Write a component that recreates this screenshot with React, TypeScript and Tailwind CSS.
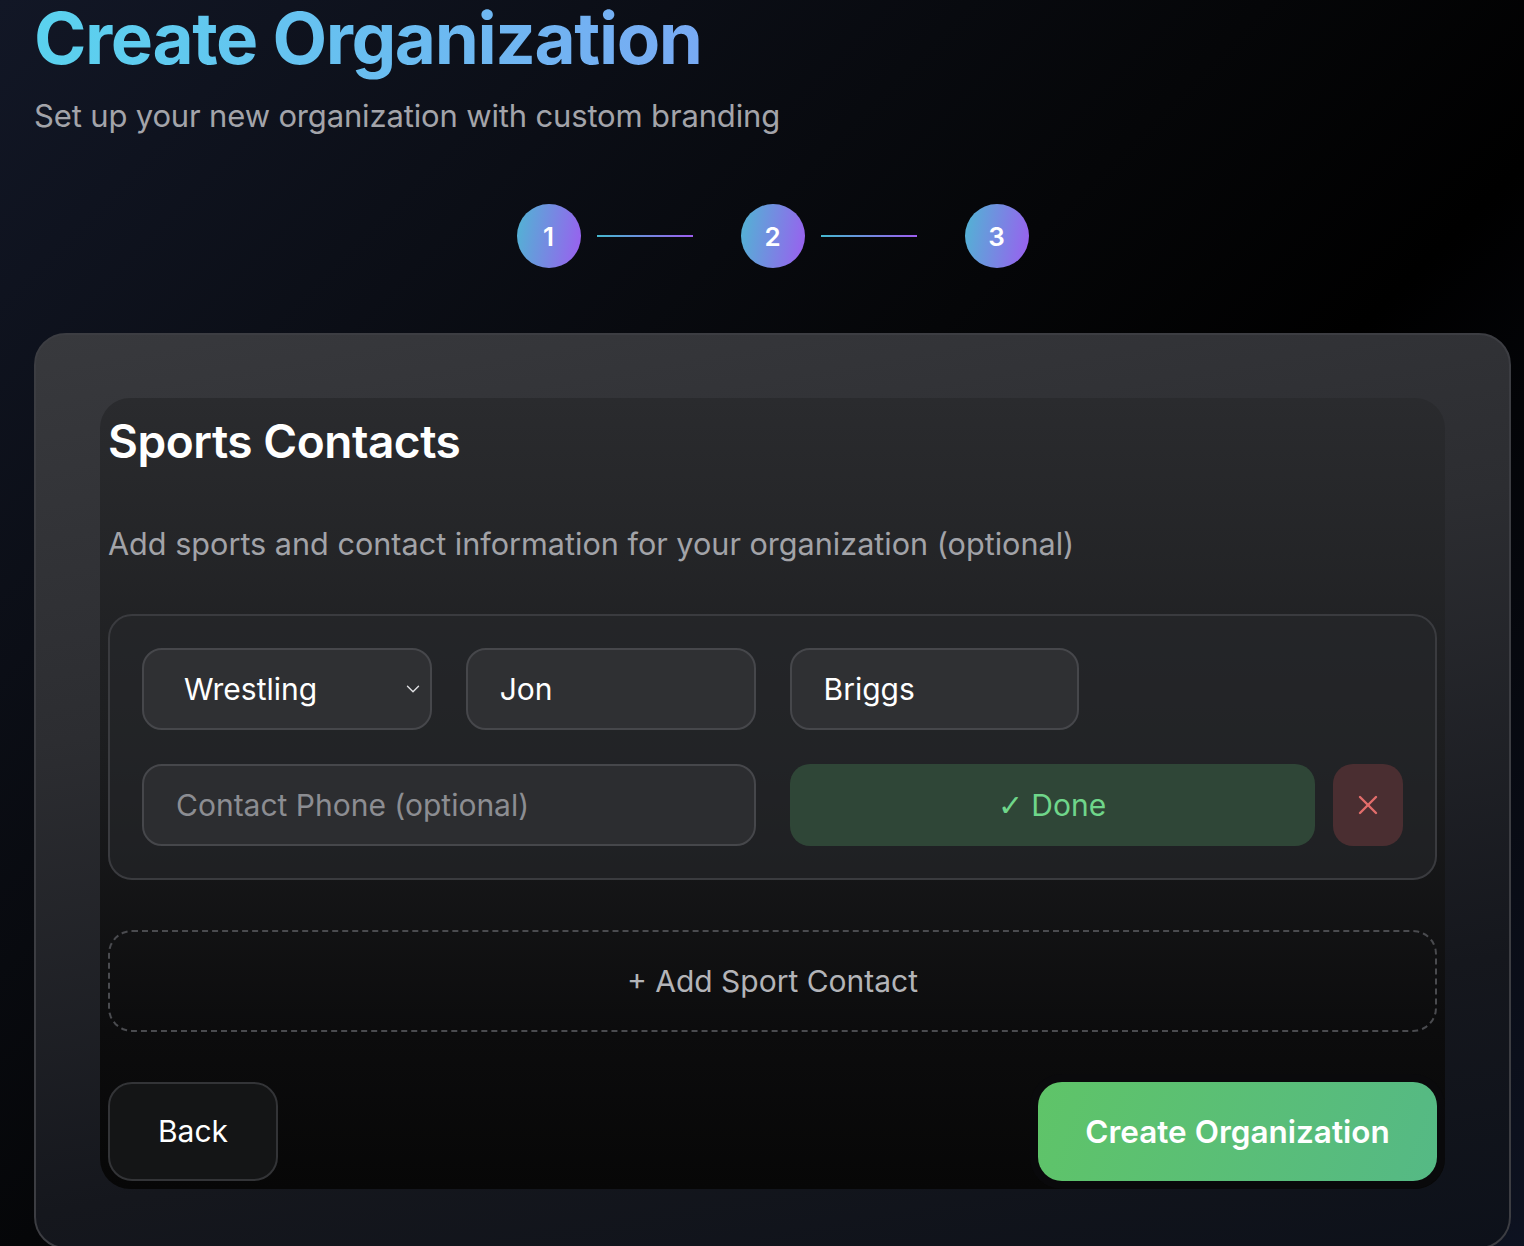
import React from "react";
import { ChevronDown, X } from "lucide-react";

function Step({ n }: { n: number }) {
  return (
    <div className="w-16 h-16 rounded-full bg-[linear-gradient(100deg,#4fb6d3,#9c5df0)] flex items-center justify-center text-white text-[26px] font-semibold">
      {n}
    </div>
  );
}

export default function App() {
  return (
    <div className="min-h-screen w-full bg-[linear-gradient(135deg,#121726_0%,#050608_45%,#000000_60%,#0e1322_100%)] font-['Inter','Noto_Sans',sans-serif] pl-[34px] pr-[13px] pb-10">
      <h1 className="text-[71px] leading-[86px] font-bold tracking-[-0.02em] bg-[linear-gradient(90deg,#5ad2ee,#78aaf3)] bg-clip-text text-transparent inline-block -mt-[5px]">
        Create Organization
      </h1>
      <p className="mt-[15px] text-[31px] leading-[40px] text-[#a3a4aa] tracking-[-0.005em]">
        Set up your new organization with custom branding
      </p>

      <div className="mt-[68px] flex items-center justify-center">
        <Step n={1} />
        <div className="ml-4 mr-12 w-24 h-[2px] bg-[linear-gradient(90deg,#45b8cf,#9d5df0)]" />
        <Step n={2} />
        <div className="ml-4 mr-12 w-24 h-[2px] bg-[linear-gradient(90deg,#45b8cf,#9d5df0)]" />
        <Step n={3} />
      </div>

      <div className="mt-[65px] rounded-[32px] border-2 border-[#3c3d42] bg-[linear-gradient(170deg,#38393d_0%,#2c2d31_35%,#15171d_75%,#0d111a_100%)] px-[64px] pt-[63px] pb-[58px]">
        <div className="rounded-[30px] bg-[linear-gradient(180deg,#2a2b2e_0%,#1c1d1f_45%,#0c0c0d_80%,#070707_100%)] p-[8px]">
          <h2 className="text-[46px] leading-[58px] font-semibold text-white tracking-[-0.01em] mt-[6px]">Sports Contacts</h2>
          <p className="mt-[54px] text-[30.6px] leading-[40px] text-[#a2a3a8]">
            Add sports and contact information for your organization (optional)
          </p>

          <div className="mt-[50px] rounded-[24px] border-2 border-[#3a3b3f] bg-[#27282b]/60 p-[32px]">
            <div className="grid grid-cols-4 gap-[34px]">
              <div className="relative h-[82px] rounded-[20px] border-2 border-[#46474b] bg-[#2f3033] flex items-center pl-[40px] text-[30px] text-white">
                Wrestling
                <ChevronDown className="absolute right-[6px] top-1/2 -translate-y-1/2 text-[#e0e0e4]" size={22} strokeWidth={1.5} />
              </div>
              <div className="h-[82px] rounded-[20px] border-2 border-[#46474b] bg-[#2f3033] flex items-center pl-[32px] text-[30px] text-white">Jon</div>
              <div className="h-[82px] rounded-[20px] border-2 border-[#46474b] bg-[#2f3033] flex items-center pl-[32px] text-[30px] text-white">Briggs</div>
              <div />
              <div className="col-span-2 h-[82px] rounded-[20px] border-2 border-[#46474b] bg-[#2c2d30] flex items-center pl-[32px] text-[30px] text-[#8c8d92]">
                Contact Phone (optional)
              </div>
              <div className="col-span-2 flex gap-[18px]">
                <div className="flex-1 h-[82px] rounded-[20px] bg-[#2f4637] flex items-center justify-center text-[30px] text-[#6fd68a]">
                  <span className="font-['DejaVu_Sans',sans-serif] text-[30px] font-light mr-[8px]">✓</span>Done
                </div>
                <div className="w-[70px] h-[82px] rounded-[20px] bg-[#4a2e31] flex items-center justify-center">
                  <X size={32} strokeWidth={1.8} className="text-[#e26d6b]" />
                </div>
              </div>
            </div>
          </div>

          <div className="mt-[50px] h-[102px] rounded-[24px] border-2 border-dashed border-[#4a4b4f] flex items-center justify-center text-[30px] text-[#b3b4b8]">
            + Add Sport Contact
          </div>

          <div className="mt-[50px] flex items-center justify-between">
            <div className="w-[170px] h-[99px] rounded-[24px] border-2 border-[#333437] bg-[#141516] flex items-center justify-center text-[30px] text-white">
              Back
            </div>
            <div className="w-[399px] h-[99px] rounded-[24px] bg-[linear-gradient(110deg,#5fc468,#55b985_100%)] shadow-[0_0_0_8px_rgba(10,10,12,0.8)] flex items-center justify-center text-[31.5px] font-semibold text-white">
              Create Organization
            </div>
          </div>
        </div>
      </div>
    </div>
  );
}
